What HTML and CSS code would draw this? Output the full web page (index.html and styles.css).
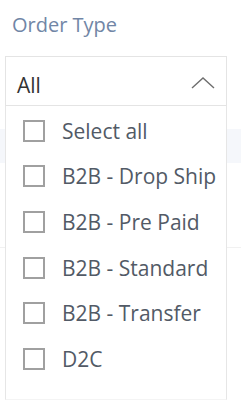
FILE: index.html
```html
<!DOCTYPE html>
<html lang="en">
<head>
  <meta charset="UTF-8" />
  <meta name="viewport" content="width=device-width, initial-scale=1.0" />
  <title>Order Type filter</title>
  <link rel="stylesheet" href="styles.css">
</head>
<body>
  <div class="table">
    <div class="table-head"></div>
    <div class="table-row"></div>
  </div>

  <div class="filter">
    <div class="filter-label">Order Type</div>
    <div class="select">
      <div class="select-head">
        <span class="select-value">All</span>
        <svg class="chevron" width="24" height="12" viewBox="0 0 24 12">
          <polyline points="1,11 12,1 23,11" fill="none" stroke="#6e6e6e" stroke-width="1.4" />
        </svg>
      </div>
      <ul class="select-menu">
        <li class="option"><span class="check"></span>Select all</li>
        <li class="option"><span class="check"></span>B2B - Drop Ship</li>
        <li class="option"><span class="check"></span>B2B - Pre Paid</li>
        <li class="option"><span class="check"></span>B2B - Standard</li>
        <li class="option"><span class="check"></span>B2B - Transfer</li>
        <li class="option"><span class="check"></span>D2C</li>
      </ul>
    </div>
  </div>
</body>
</html>
```

FILE: styles.css
```css
body {
  font-family: 'Open Sans', 'Noto Sans', sans-serif;
  background-color: #fff;
  margin: 0;
  padding: 0;
}
.filter {
  position: relative;
  z-index: 1;
  padding-top: 13px;
}
.filter-label {
  margin-left: 12px;
  font-size: 20px;
  line-height: 24px;
  color: #7186a6;
}
.select {
  margin: 19px 0 0 5px;
  width: 222px;
}
.select-head {
  display: flex;
  justify-content: space-between;
  align-items: flex-start;
  height: 32px;
  padding: 16px 11px 0 11px;
  border: 1px solid #e4e4e4;
}
.select-value {
  font-size: 21px;
  line-height: 24px;
  color: #333;
}
.chevron {
  margin-top: 4px;
}
.select-menu {
  margin: 0;
  padding: 2px 0 17px;
  list-style: none;
  background: #fff;
  border: 1px solid #e6e6e6;
  border-top: none;
  border-bottom-color: #f4f4f4;
}
.option {
  display: flex;
  align-items: center;
  height: 45.6px;
  padding-left: 17px;
  font-size: 21px;
  line-height: 24px;
  color: #525a66;
}
.check {
  width: 22px;
  height: 22px;
  box-sizing: border-box;
  border: 2px solid #a0a0a0;
  margin-right: 17px;
}
.table {
  position: absolute;
  top: 129px;
  left: 0;
  width: 100%;
}
.table-head {
  height: 34px;
  background: #f5f7fb;
}
.table-row {
  height: 84px;
  border-bottom: 1px solid #f1f1f1;
}
```
